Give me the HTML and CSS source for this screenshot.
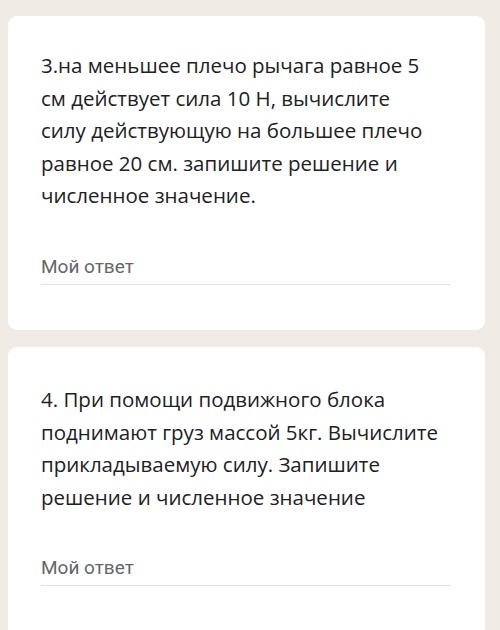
FILE: index.html
```html
<!DOCTYPE html>
<html lang="ru">
<head>
    <meta charset="UTF-8">
    <meta name="viewport" content="width=device-width, initial-scale=1.0">
    <title>Форма</title>
    <link rel="stylesheet" href="styles.css">
</head>
<body>
    <div class="form">
        <section class="card">
            <div class="question">3.на меньшее плечо рычага равное 5<br>см действует сила 10 Н, вычислите<br>силу действующую на большее плечо<br>равное 20 см. запишите решение и<br>численное значение.</div>
            <div class="answer">Мой ответ</div>
        </section>

        <section class="card card-last">
            <div class="question">4. При помощи подвижного блока<br>поднимают груз массой 5кг. Вычислите<br>прикладываемую силу. Запишите<br>решение и численное значение</div>
            <div class="answer">Мой ответ</div>
        </section>
    </div>
</body>
</html>
```

FILE: styles.css
```css
* {
    margin: 0;
    padding: 0;
    box-sizing: border-box;
}

body {
    font-family: 'Open Sans', 'Noto Sans', sans-serif;
    background-color: #f1ebe6;
    width: 500px;
    height: 630px;
    overflow: hidden;
}

.form {
    display: flex;
    flex-direction: column;
    gap: 17px;
    padding: 16px 15px 0 8px;
}

.card {
    background-color: #fff;
    border-radius: 9px;
    padding: 33px 35px 0 33px;
    height: 314px;
}

.card-last {
    height: 290px;
    padding-top: 36px;
}

.question {
    font-size: 20.5px;
    line-height: 32.5px;
    color: #202124;
    white-space: nowrap;
}

.answer {
    margin-top: 42px;
    font-family: Roboto, 'Noto Sans', sans-serif;
    font-size: 19px;
    line-height: 26px;
    color: #646669;
    padding-bottom: 4px;
    border-bottom: 1.5px solid #e2e2e2;
}

.card-last .answer {
    margin-top: 42px;
}
```
